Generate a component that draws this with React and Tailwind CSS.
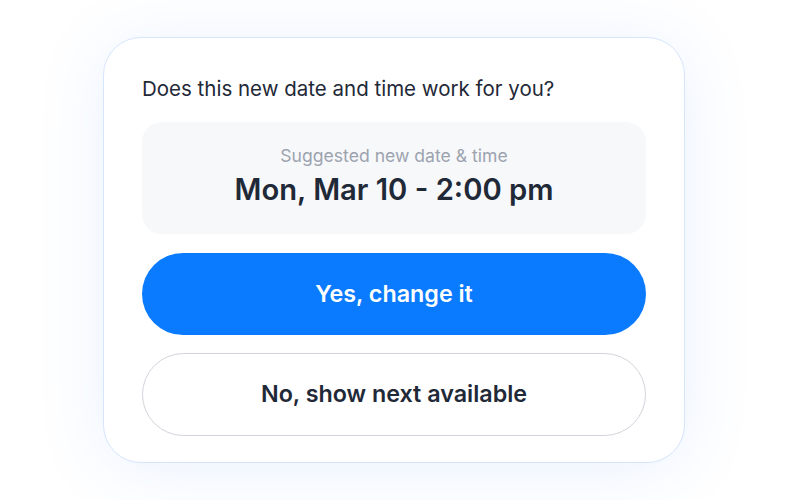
export default function App() {
  return (
    <div
      className="w-[788px] h-[500px] bg-white flex items-center justify-center"
      style={{ fontFamily: "Inter, 'Noto Sans', sans-serif" }}
    >
      <div className="w-[582px] rounded-[38px] border border-[#d6e5fc] bg-white px-[38px] pt-[37px] pb-[26px] shadow-[0_6px_70px_rgba(59,130,246,0.11)] flex flex-col">
        <p className="text-[20.5px] leading-[28px] text-[#1f2937] mb-[19px]">
          Does this new date and time work for you?
        </p>

        <div className="rounded-[20px] bg-[#f7f8fa] h-[112px] flex flex-col items-center justify-center">
          <p className="text-[17.6px] leading-[20px] text-[#9ca3af] -mt-[4px]">
            Suggested new date &amp; time
          </p>
          <p className="text-[29.2px] leading-[34px] font-semibold text-[#1f2937] mt-[7px]">
            Mon, Mar 10 - 2:00 pm
          </p>
        </div>

        <button className="mt-[19px] h-[82px] rounded-full bg-[#0a7aff] text-white text-[23.3px] font-semibold">
          Yes, change it
        </button>

        <button className="mt-[18px] h-[83px] rounded-full border border-[#d1d5db] bg-white text-[#1f2937] text-[23.3px] font-semibold">
          No, show next available
        </button>
      </div>
    </div>
  );
}
